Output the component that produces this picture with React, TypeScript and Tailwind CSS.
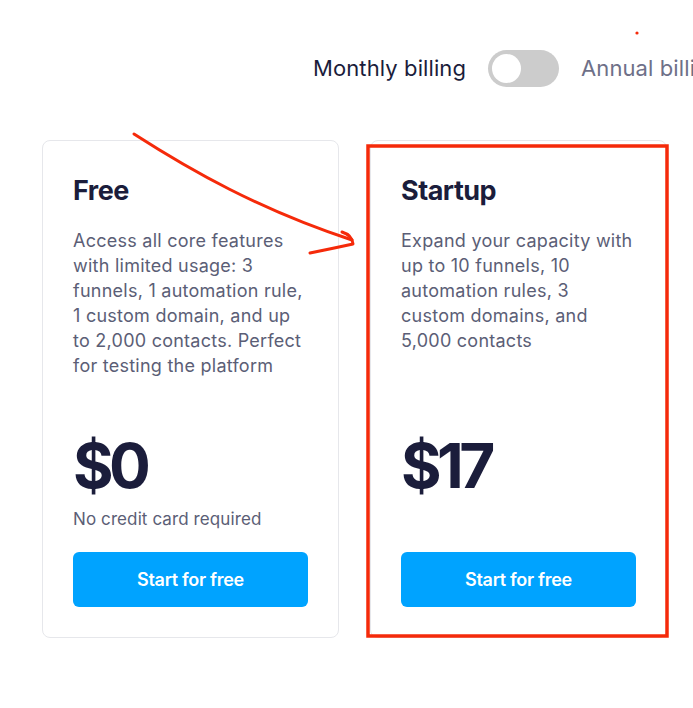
import React from 'react';

const plans = [
  {
    name: 'Free',
    desc: 'Access all core features with limited usage: 3 funnels, 1 automation rule, 1 custom domain, and up to 2,000 contacts. Perfect for testing the platform',
    price: '$0',
    note: 'No credit card required',
  },
  {
    name: 'Startup',
    desc: 'Expand your capacity with up to 10 funnels, 10 automation rules, 3 custom domains, and 5,000 contacts',
    price: '$17',
    note: '',
  },
];

export default function App() {
  return (
    <div className="relative w-[693px] h-[708px] overflow-hidden bg-white font-['Inter',sans-serif]">
      {/* Billing toggle */}
      <div className="flex items-center gap-[22px] pl-[313px] pt-[50px] whitespace-nowrap">
        <span className="shrink-0 text-[22px] tracking-[0.1px] text-[#1b1d3b]">Monthly billing</span>
        <div className="shrink-0 w-[71px] h-[37px] rounded-full bg-[#cccccc] p-[4px] flex items-center">
          <div className="w-[29px] h-[29px] rounded-full bg-white" />
        </div>
        <span className="shrink-0 text-[22px] tracking-[0.1px] text-[#6e7088]">Annual billing</span>
      </div>

      {/* Plans */}
      <div className="flex gap-[31px] pl-[42px] mt-[53px]">
        {plans.map((plan) => (
          <div
            key={plan.name}
            className="w-[297px] h-[498px] shrink-0 flex flex-col border border-[#e6e7eb] rounded-[8px] px-[30px] pt-[32px] pb-[30px]"
          >
            <h3 className="text-[27px] font-bold leading-[36px] tracking-[-0.5px] text-[#1b1d3b]">{plan.name}</h3>
            <p className="mt-[19px] text-[18px] leading-[25px] tracking-[0.25px] text-[#5b5e76]">{plan.desc}</p>
            <div className="mt-auto">
              <div className="pb-[5px] text-[62px] font-bold leading-[70px] tracking-[-4.5px] text-[#1b1d3b]">{plan.price}</div>
              <div className="h-[26px] text-[17px] leading-[26px] tracking-[0.1px] text-[#5b5e76]">{plan.note}</div>
              <button className="mt-[20px] w-full h-[55px] rounded-[6px] bg-[#00a3ff] text-white text-[18px] font-semibold tracking-[-0.3px]">
                Start for free
              </button>
            </div>
          </div>
        ))}
      </div>

      {/* Annotations */}
      <svg className="absolute inset-0 pointer-events-none" width="693" height="708" viewBox="0 0 693 708">
        <path
          d="M134 134 C 190 170, 260 210, 352 240"
          fill="none"
          stroke="#f52a0a"
          strokeWidth="3"
          strokeLinecap="round"
        />
        <path
          d="M342 232 Q 352 235 353 244 Q 330 249 310 253"
          fill="none"
          stroke="#f52a0a"
          strokeWidth="3"
          strokeLinecap="round"
          strokeLinejoin="round"
        />
        <rect x="368" y="146" width="299" height="490" fill="none" stroke="#f52a0a" strokeWidth="3.5" />
        <circle cx="637" cy="33" r="1.6" fill="#f52a0a" />
      </svg>
    </div>
  );
}
